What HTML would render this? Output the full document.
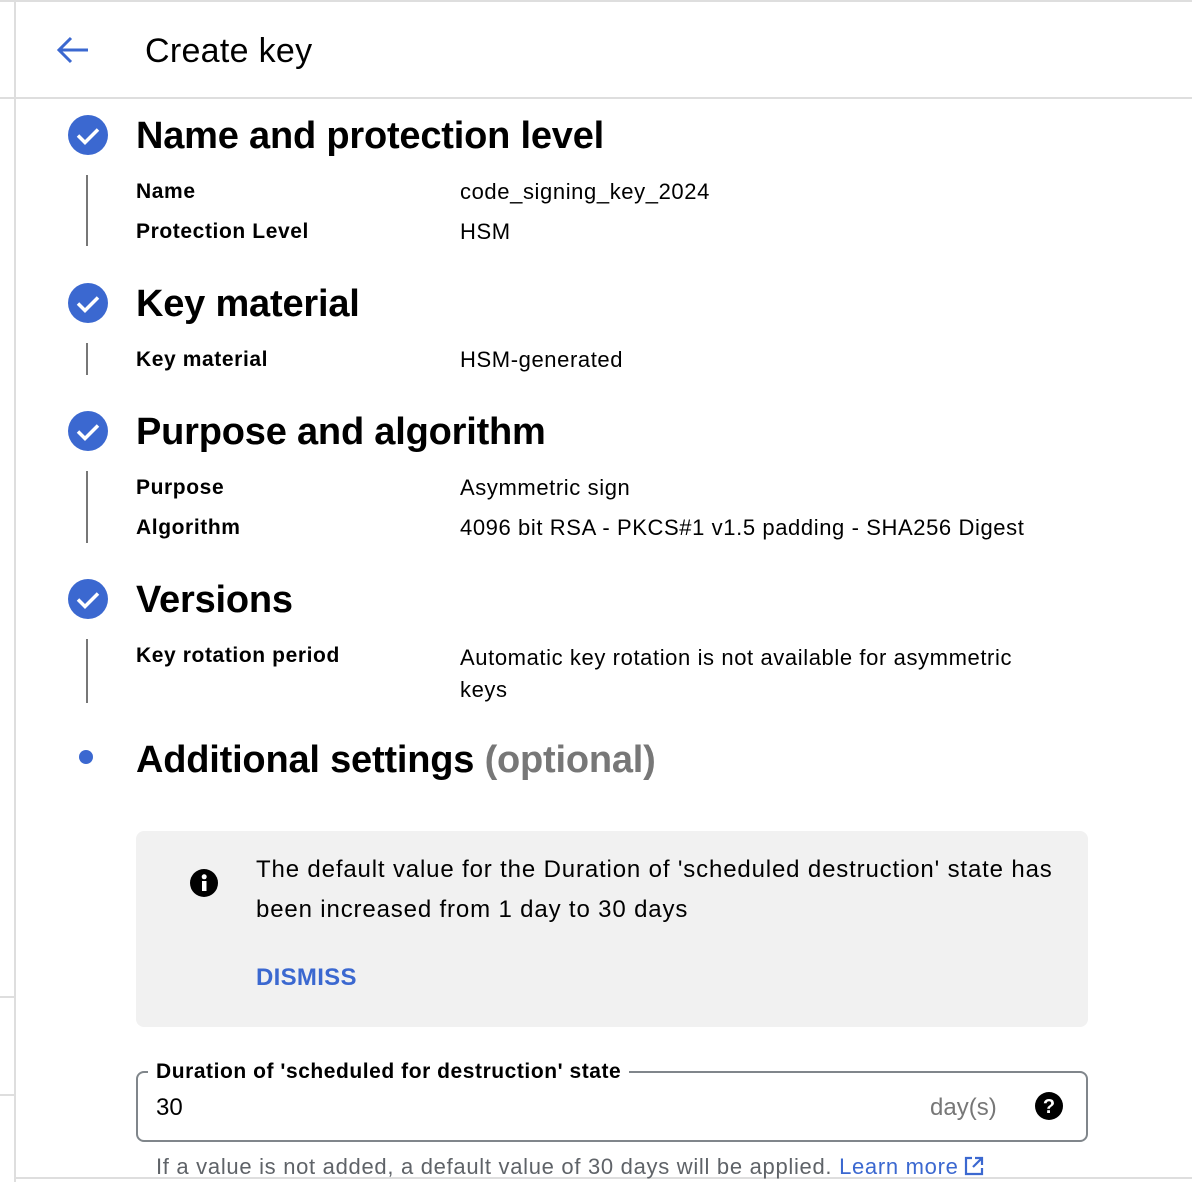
<!DOCTYPE html>
<html><head><meta charset="utf-8"><style>
*{margin:0;padding:0;box-sizing:border-box}
body{width:1192px;height:1182px;position:relative;background:#fff;font-family:"Liberation Sans",Arial,sans-serif;color:#000;overflow:hidden}
.a{position:absolute;white-space:nowrap}
.h{font-size:38px;font-weight:bold;line-height:44px;left:136px;letter-spacing:-0.2px}
.l{font-size:21px;font-weight:bold;left:136px;line-height:28px;letter-spacing:0.6px}
.v{font-size:22px;left:460px;line-height:28px;letter-spacing:0.6px}
.vl{position:absolute;left:86px;width:2px;background:#777}
.ck{position:absolute;left:68px;width:40px;height:40px}
</style></head><body>
<div class="a" style="left:0;top:0;width:1192px;height:2px;background:#dedede"></div>
<div class="a" style="left:14px;top:0;width:2px;height:1182px;background:#dedede"></div>
<div class="a" style="left:0;top:97px;width:1192px;height:2px;background:#dedede"></div>
<div class="a" style="left:0;top:996px;width:15px;height:2px;background:#dedede"></div>
<div class="a" style="left:0;top:1094px;width:15px;height:2px;background:#dedede"></div>
<div class="a" style="left:15px;top:1177px;width:1177px;height:2px;background:#dedede"></div>

<svg class="a" style="left:54px;top:32px" width="36" height="36" viewBox="0 0 36 36"><path d="M34 18H6M17 6L5 18l12 12" fill="none" stroke="#3b68d0" stroke-width="3"/></svg>
<div class="a" style="left:145px;top:31px;font-size:34px;line-height:40px;letter-spacing:0.3px">Create key</div>

<svg class="ck" style="top:115px" viewBox="0 0 40 40"><circle cx="20" cy="20" r="20" fill="#3b68d0"/><path d="M10 20.5l7 7 13-13" fill="none" stroke="#fff" stroke-width="3.5"/></svg>
<div class="a h" style="top:114px">Name and protection level</div>
<div class="vl" style="top:175px;height:71px"></div>
<div class="a l" style="top:178px">Name</div><div class="a v" style="top:178px">code_signing_key_2024</div>
<div class="a l" style="top:218px">Protection Level</div><div class="a v" style="top:218px">HSM</div>

<svg class="ck" style="top:283px" viewBox="0 0 40 40"><circle cx="20" cy="20" r="20" fill="#3b68d0"/><path d="M10 20.5l7 7 13-13" fill="none" stroke="#fff" stroke-width="3.5"/></svg>
<div class="a h" style="top:282px">Key material</div>
<div class="vl" style="top:343px;height:32px"></div>
<div class="a l" style="top:346px">Key material</div><div class="a v" style="top:346px">HSM-generated</div>

<svg class="ck" style="top:411px" viewBox="0 0 40 40"><circle cx="20" cy="20" r="20" fill="#3b68d0"/><path d="M10 20.5l7 7 13-13" fill="none" stroke="#fff" stroke-width="3.5"/></svg>
<div class="a h" style="top:410px">Purpose and algorithm</div>
<div class="vl" style="top:471px;height:72px"></div>
<div class="a l" style="top:474px">Purpose</div><div class="a v" style="top:474px">Asymmetric sign</div>
<div class="a l" style="top:514px">Algorithm</div><div class="a v" style="top:514px">4096 bit RSA - PKCS#1 v1.5 padding - SHA256 Digest</div>

<svg class="ck" style="top:579px" viewBox="0 0 40 40"><circle cx="20" cy="20" r="20" fill="#3b68d0"/><path d="M10 20.5l7 7 13-13" fill="none" stroke="#fff" stroke-width="3.5"/></svg>
<div class="a h" style="top:578px">Versions</div>
<div class="vl" style="top:639px;height:64px"></div>
<div class="a l" style="top:642px">Key rotation period</div>
<div class="a v" style="top:642px;line-height:32px;white-space:normal;width:590px">Automatic key rotation is not available for asymmetric keys</div>

<div class="a" style="left:79px;top:750px;width:14px;height:14px;border-radius:50%;background:#3b68d0"></div>
<div class="a h" style="top:738px">Additional settings <span style="color:#777">(optional)</span></div>

<div class="a" style="left:136px;top:831px;width:952px;height:196px;background:#f1f1f1;border-radius:8px"></div>
<svg class="a" style="left:190px;top:869px" width="28" height="28" viewBox="0 0 28 28"><circle cx="14" cy="14" r="14" fill="#000"/><rect x="12" y="12" width="4.5" height="10" fill="#fff"/><circle cx="14.2" cy="7.8" r="2.5" fill="#fff"/></svg>
<div class="a" style="left:256px;top:850px;font-size:24px;line-height:40px;letter-spacing:0.85px">The default value for the Duration of 'scheduled destruction' state has<br>been increased from 1 day to 30 days</div>
<div class="a" style="left:256px;top:963px;font-size:24px;line-height:30px;font-weight:bold;color:#3b68d0;letter-spacing:0.3px">DISMISS</div>

<div class="a" style="left:136px;top:1071px;width:952px;height:71px;border:2px solid #80868b;border-radius:8px"></div>
<div class="a" style="left:148px;top:1058px;padding:0 8px;background:#fff;font-size:21px;font-weight:bold;line-height:28px;letter-spacing:0.55px">Duration of 'scheduled for destruction' state</div>
<div class="a" style="left:156px;top:1093px;font-size:24px;line-height:30px">30</div>
<div class="a" style="left:930px;top:1093px;font-size:24px;line-height:30px;color:#777">day(s)</div>
<svg class="a" style="left:1035px;top:1092px" width="28" height="28" viewBox="0 0 28 28"><circle cx="14" cy="14" r="14" fill="#000"/><text x="14" y="21" text-anchor="middle" font-family="Liberation Sans" font-weight="bold" font-size="20" fill="#fff">?</text></svg>
<div class="a" style="left:156px;top:1153px;font-size:22px;line-height:28px;color:#5f6368;letter-spacing:0.7px">If a value is not added, a default value of 30 days will be applied. <span style="color:#3b68d0">Learn more</span><svg style="vertical-align:-3px;margin-left:4px" width="22" height="22" viewBox="0 0 22 22"><path d="M9 3H3v16h16v-6M12 3h7v7M19 3L10 12" fill="none" stroke="#3b68d0" stroke-width="2.2"/></svg></div>
</body></html>
